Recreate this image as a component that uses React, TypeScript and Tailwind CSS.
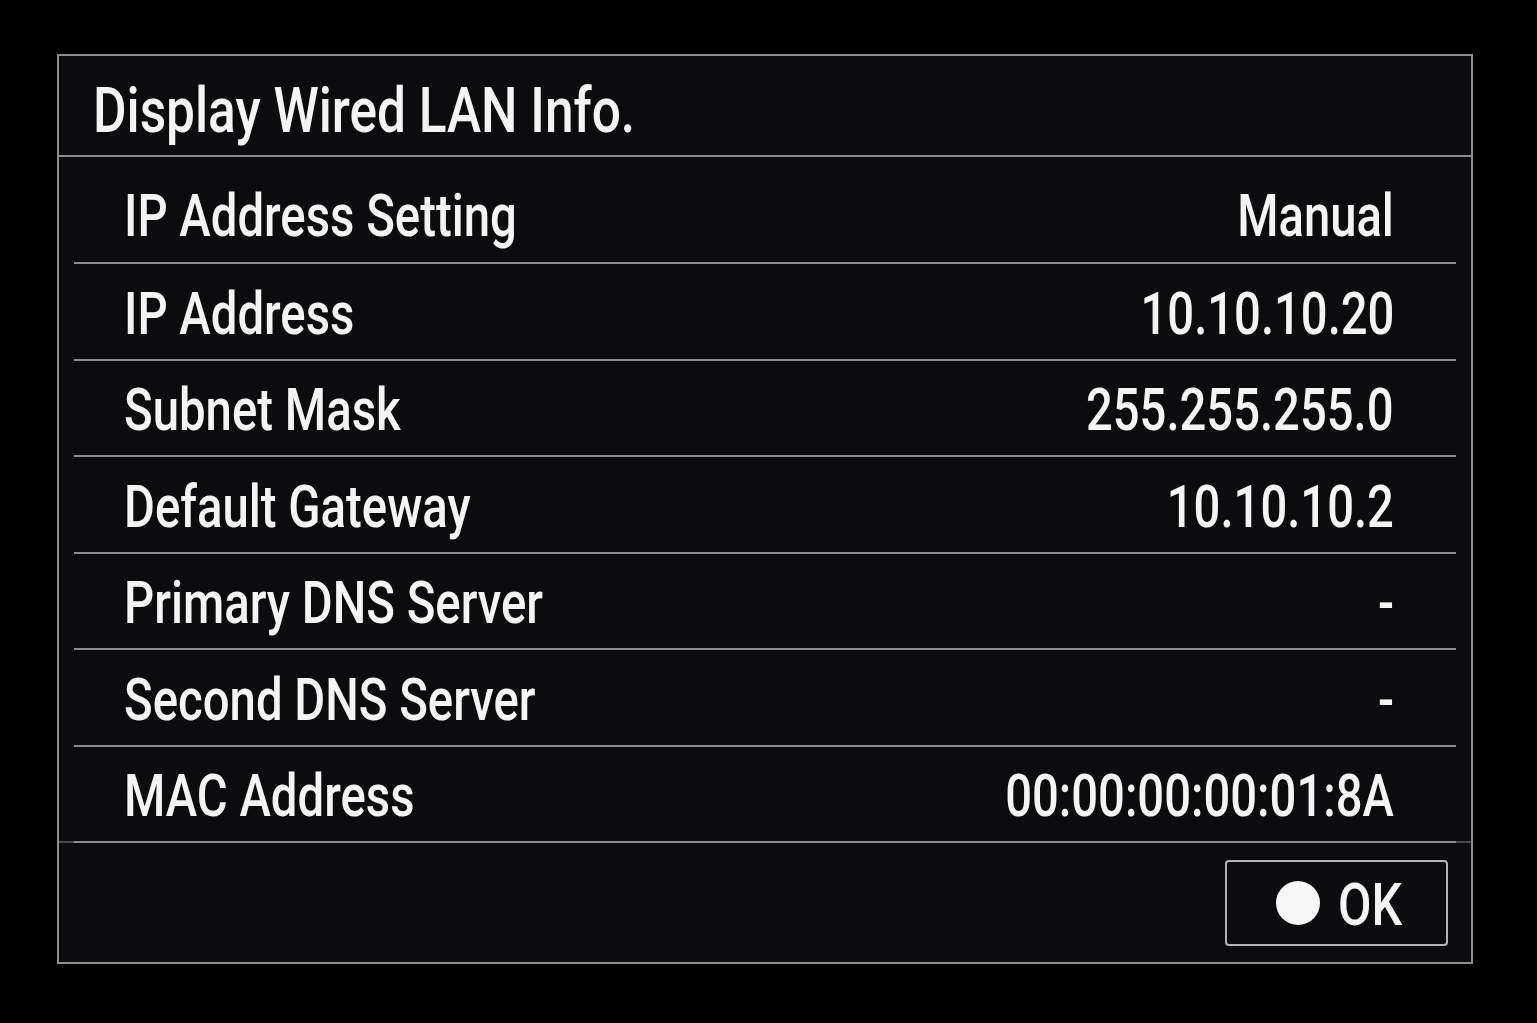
const rows: { label: string; value: string }[] = [
  { label: 'IP Address Setting', value: 'Manual' },
  { label: 'IP Address', value: '10.10.10.20' },
  { label: 'Subnet Mask', value: '255.255.255.0' },
  { label: 'Default Gateway', value: '10.10.10.2' },
  { label: 'Primary DNS Server', value: '-' },
  { label: 'Second DNS Server', value: '-' },
  { label: 'MAC Address', value: '00:00:00:00:01:8A' },
]

export default function App() {
  return (
    <div
      className="min-h-[1023px] w-full bg-black pt-[54px] pl-[57px]"
      style={{ fontFamily: 'Roboto, "Liberation Sans", sans-serif' }}
    >
      <div className="flex h-[910px] w-[1416px] flex-col border-2 border-[#8c8c8c] bg-[#0c0c0e] text-[#f4f4f4]">
        <div className="flex h-[101px] shrink-0 items-center border-b-2 border-[#8c8c8c] pl-[34px] pt-[10px]">
          <span className="inline-block origin-left scale-x-[0.816] whitespace-nowrap text-[63px] leading-none font-medium">
            Display Wired LAN Info.
          </span>
        </div>

        <div className="border-b-2 border-[#4a4a4c]">
          <div className="px-[15px]">
            {rows.map((r, i) => (
              <div
                key={r.label}
                className={`flex items-center justify-between border-b-2 border-[#8c8c8c] pl-[50px] pr-[62px] ${
                  i === 0 ? 'h-[107px] pt-[12px]' : 'h-[96.5px] pt-[4px]'
                } ${i === rows.length - 1 ? '-mb-[2px]' : ''}`}
              >
                <span className="inline-block origin-left scale-x-[0.802] whitespace-nowrap text-[59px] leading-none font-medium">
                  {r.label}
                </span>
                <span className="inline-block origin-right scale-x-[0.8] whitespace-nowrap text-[59px] leading-none font-medium">
                  {r.value}
                </span>
              </div>
            ))}
          </div>
        </div>

        <div className="flex flex-1 items-center justify-end pr-[23px]">
          <div className="flex h-[86px] w-[223px] items-center rounded-[4px] border-2 border-[#b4b4b4] pl-[49px]">
            <span className="h-[44px] w-[44px] rounded-full bg-[#f6f6f6]" />
            <span className="ml-[18px] inline-block origin-left scale-x-[0.81] text-[60px] leading-none font-medium pt-[4px]">
              OK
            </span>
          </div>
        </div>
      </div>
    </div>
  )
}
